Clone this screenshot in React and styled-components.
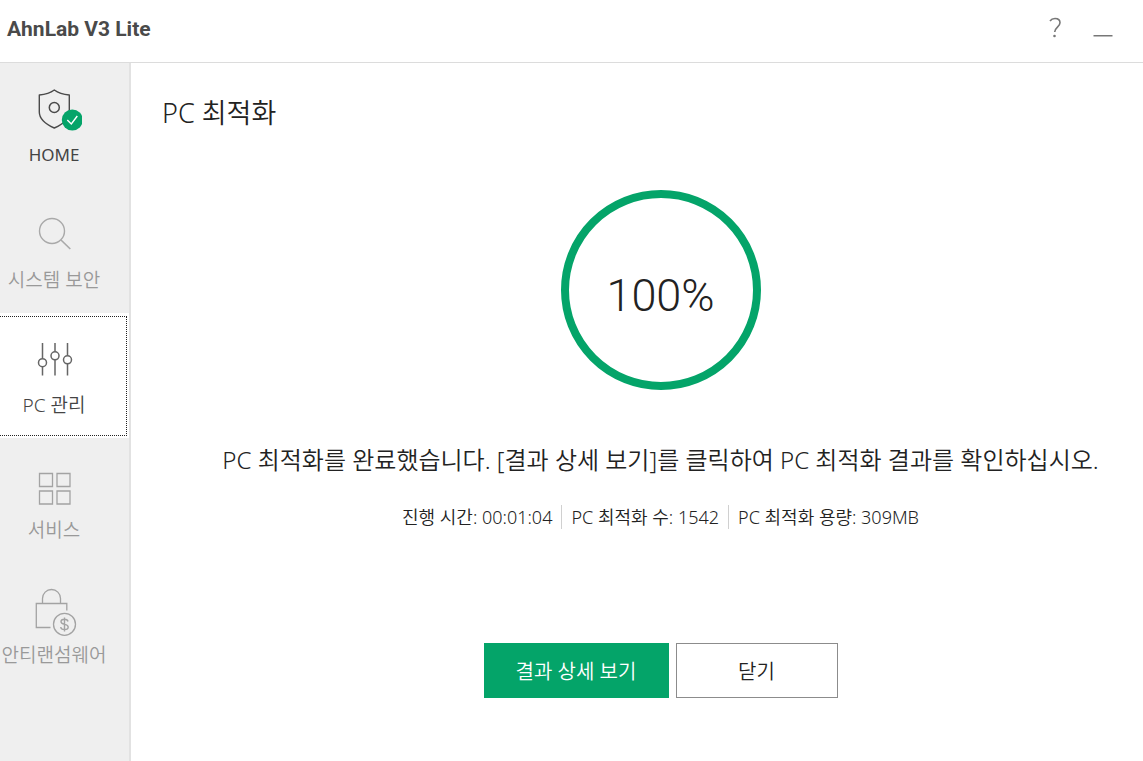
import React from "react";
import styled, { createGlobalStyle } from "styled-components";

const GlobalStyle = createGlobalStyle`
  * {
    box-sizing: border-box;
  }

  html,
  body,
  #root {
    height: 100%;
    margin: 0;
  }

  body,
  button {
    font-family: "Noto Sans", "Noto Sans CJK KR", sans-serif;
    color: #222;
  }
`;

const Window = styled.div`
  display: flex;
  flex-direction: column;
  min-height: 100%;
  background: #fff;
`;

const TitleBar = styled.header`
  display: flex;
  align-items: center;
  justify-content: space-between;
  height: 63px;
  padding: 0 29px 4px 7px;
  border-bottom: 1px solid #dcdcdc;
`;

const Logo = styled.h1`
  margin: 0;
  font-family: Roboto, sans-serif;
  font-size: 21px;
  font-weight: 700;
  line-height: 28px;
  color: #4a4a4a;
`;

const WindowControls = styled.div`
  display: flex;
  gap: 26px;
`;

const ControlButton = styled.button`
  display: flex;
  padding: 0;
  border: 0;
  background: none;
`;

const Body = styled.div`
  display: flex;
  flex: 1;
`;

const Sidebar = styled.nav`
  flex: none;
  width: 131px;
  background: #efefef;
  border-right: 2px solid #e2e2e2;
`;

const NavItem = styled.button`
  display: block;
  width: 100%;
  height: 125px;
  padding: 3px 2px 2px 0;
  border: 0;
  background: ${({ $active }) => ($active ? "#fff" : "none")};
  color: ${({ $muted }) => ($muted ? "#999" : "#444")};
`;

const NavFocus = styled.span`
  display: flex;
  flex-direction: column;
  align-items: center;
  height: 100%;
  padding: 18px 18px 0 0;
  border: 1px dotted ${({ $active }) => ($active ? "#222" : "transparent")};
  border-left: 0;
`;

const NavLabel = styled.span`
  margin-top: 6px;
  font-size: ${({ $latin }) => ($latin ? "17px" : "19px")};
  font-weight: ${({ $latin }) => ($latin ? 400 : 350)};
  line-height: 24px;
  white-space: nowrap;
`;

const Content = styled.main`
  flex: 1;
  padding: 32px 0 32px 31px;
`;

const PageTitle = styled.h2`
  margin: 0;
  font-size: 27px;
  font-weight: 350;
  line-height: 36px;
`;

const Result = styled.section`
  display: flex;
  flex-direction: column;
  align-items: center;
  padding: 59px 0 0 16px;
`;

const ProgressRing = styled.div`
  display: flex;
  align-items: center;
  justify-content: center;
  width: 200px;
  height: 200px;
  padding-top: 10px;
  border: 8px solid #04a469;
  border-radius: 50%;
  font-family: Roboto, sans-serif;
  font-size: 45px;
  font-weight: 300;
`;

const Message = styled.p`
  margin: 52px 0 0;
  font-size: 24px;
  font-weight: 350;
  line-height: 36px;
  white-space: nowrap;
`;

const Stats = styled.ul`
  display: flex;
  align-items: center;
  margin: 27px 0 0;
  padding: 0;
  list-style: none;
  font-size: 18px;
  font-weight: 350;
  line-height: 24px;
  white-space: nowrap;
`;

const Stat = styled.li`
  & + & {
    margin-left: 9px;
    padding-left: 9px;
    border-left: 1px solid #d0d0d0;
  }
`;

const Actions = styled.div`
  display: flex;
  gap: 7px;
  margin-top: 114px;
`;

const ActionButton = styled.button`
  width: ${({ $primary }) => ($primary ? "185px" : "162px")};
  height: 55px;
  padding: 0;
  border: 1px solid ${({ $primary }) => ($primary ? "#04a469" : "#8c8c8c")};
  background: ${({ $primary }) => ($primary ? "#04a469" : "#fff")};
  color: ${({ $primary }) => ($primary ? "#fff" : "#222")};
  font-size: 20px;
  font-weight: 350;
`;

const HomeIcon = () => (
  <svg width="56" height="52" viewBox="0 0 56 52" fill="none">
    <path
      d="M28.300 5c4 3 9 4.500 15 5v17c0 6-6 12-15 16-9-4-15-10-15-16V10c6-.5 11-2 15-5z"
      stroke="#4a4a4a"
      strokeWidth="1.400"
      strokeLinejoin="round"
    />
    <circle cx="28.300" cy="22.500" r="5" stroke="#4a4a4a" strokeWidth="1.500" />
    <circle cx="46.300" cy="35" r="10.500" fill="#04a469" />
    <path d="M41.300 35l4 4 6-8" stroke="#fff" strokeWidth="1.400" />
  </svg>
);

const SearchIcon = () => (
  <svg width="56" height="52" viewBox="0 0 56 52" fill="none" stroke="#a9a9a9">
    <circle cx="26" cy="21" r="12.500" strokeWidth="1.400" />
    <path d="M35 30l9.300 9" strokeWidth="1.600" />
  </svg>
);

const SlidersIcon = () => (
  <svg width="56" height="52" viewBox="0 0 56 52" fill="none" stroke="#666">
    <path
      d="M16.500 8v15.500M16.500 32v8.500M29 8v8.500M29 25v15.500M41.500 8v12.500M41.500 29v11.500"
      strokeWidth="1.500"
    />
    <circle cx="16.500" cy="27.700" r="4" strokeWidth="1.500" />
    <circle cx="29" cy="20.800" r="4" strokeWidth="1.500" />
    <circle cx="41.500" cy="24.800" r="4" strokeWidth="1.500" />
  </svg>
);

const GridIcon = () => (
  <svg width="56" height="52" viewBox="0 0 56 52" fill="none" stroke="#a3a3a3">
    <path
      d="M13.500 13.500h13v13h-13zM31 13.500h13v13h-13zM13.500 31h13v13h-13zM31 31h13v13h-13z"
      strokeWidth="1.300"
    />
  </svg>
);

const LockIcon = () => (
  <svg width="56" height="52" viewBox="0 0 56 52" fill="none" stroke="#a3a3a3">
    <path
      d="M16.500 18.500V13.500a9 9 0 0 1 18 0v5M24.500 42.500H10.300V18.500h30.500V25.500"
      strokeWidth="1.300"
    />
    <circle cx="38.500" cy="39.300" r="11" strokeWidth="1.300" />
    <path
      d="M42 36.500c-.3-1.500-1.600-2.200-3.500-2.200-2 0-3.500.9-3.500 2.500 0 3.600 7.200 1.600 7.200 5.200 0 1.700-1.600 2.600-3.700 2.600s-3.600-.9-3.800-2.600M38.500 32.500v14"
      strokeWidth="1.400"
    />
  </svg>
);

const navItems = [
  { label: "HOME", Icon: HomeIcon, latin: true },
  { label: "시스템 보안", Icon: SearchIcon, muted: true },
  { label: "PC 관리", Icon: SlidersIcon, active: true },
  { label: "서비스", Icon: GridIcon, muted: true },
  { label: "안티랜섬웨어", Icon: LockIcon, muted: true },
];

const App = () => {
  return (
    <Window>
      <GlobalStyle />
      <TitleBar>
        <Logo>AhnLab V3 Lite</Logo>
        <WindowControls>
          <ControlButton aria-label="도움말">
            <svg width="20" height="24" viewBox="0 0 20 24" fill="none">
              <path
                d="M4 4C5.300 2.100 7 1.500 9 1.500c3 0 5 1.700 5 4.300 0 4-5.300 4.700-5.300 9.200"
                stroke="#777"
                strokeWidth="1.600"
              />
              <circle cx="8.500" cy="19" r="1.300" fill="#777" />
            </svg>
          </ControlButton>
          <ControlButton aria-label="최소화">
            <svg width="22" height="24" viewBox="0 0 22 24">
              <path d="M1.500 18h19v1.500h-19z" fill="#777" />
            </svg>
          </ControlButton>
        </WindowControls>
      </TitleBar>
      <Body>
        <Sidebar>
          {navItems.map(({ label, Icon, muted, active, latin }) => (
            <NavItem key={label} $muted={muted} $active={active}>
              <NavFocus $active={active}>
                <Icon />
                <NavLabel $latin={latin}>{label}</NavLabel>
              </NavFocus>
            </NavItem>
          ))}
        </Sidebar>
        <Content>
          <PageTitle>PC 최적화</PageTitle>
          <Result>
            <ProgressRing>100%</ProgressRing>
            <Message>
              PC 최적화를 완료했습니다. [결과 상세 보기]를 클릭하여 PC 최적화
              결과를 확인하십시오.
            </Message>
            <Stats>
              <Stat>진행 시간: 00:01:04</Stat>
              <Stat>PC 최적화 수: 1542</Stat>
              <Stat>PC 최적화 용량: 309MB</Stat>
            </Stats>
            <Actions>
              <ActionButton $primary>결과 상세 보기</ActionButton>
              <ActionButton>닫기</ActionButton>
            </Actions>
          </Result>
        </Content>
      </Body>
    </Window>
  );
};

export default App;
